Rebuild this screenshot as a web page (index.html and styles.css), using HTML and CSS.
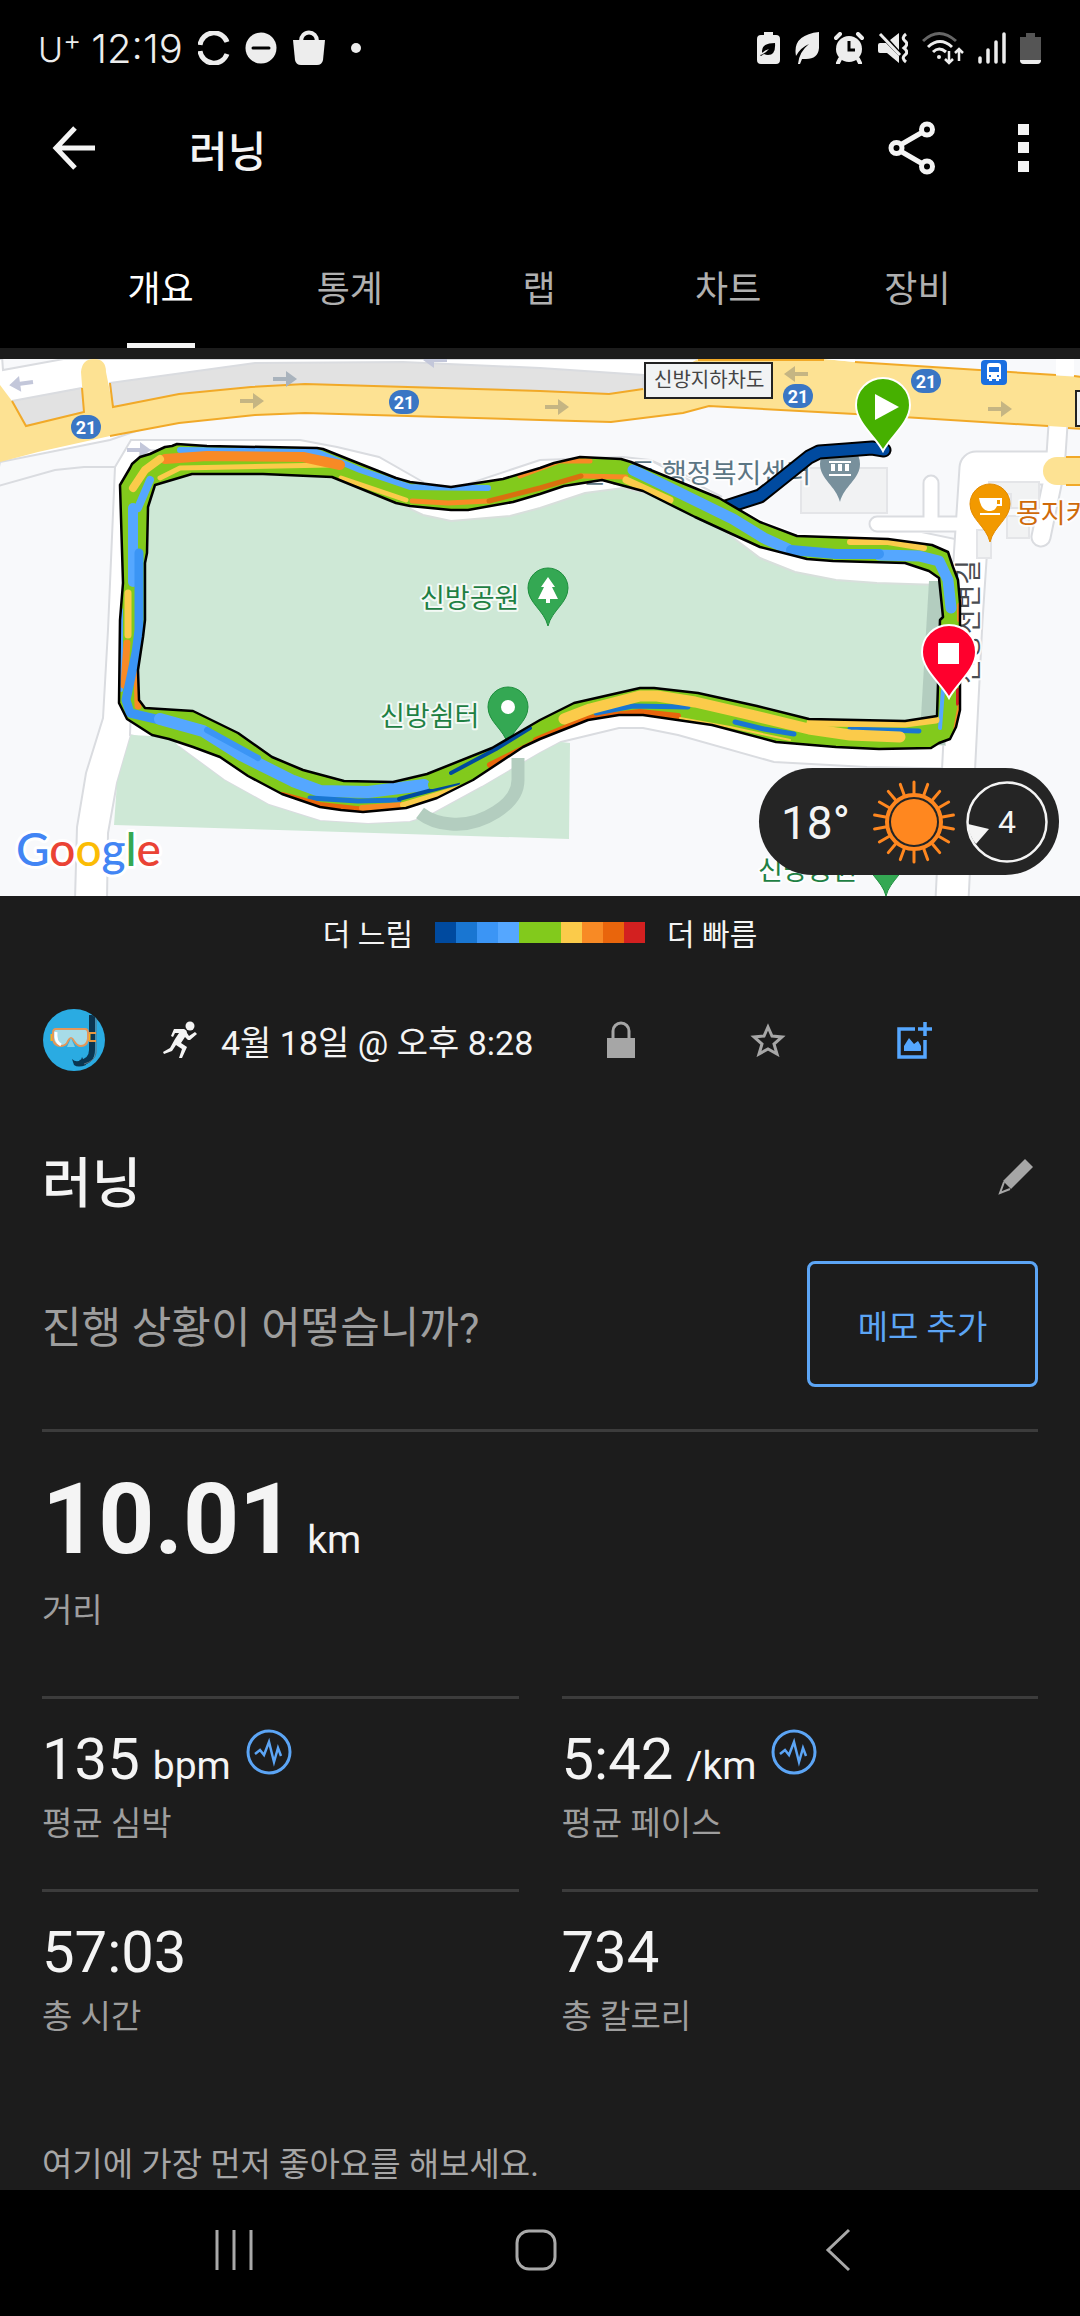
FILE: index.html
```html
<!DOCTYPE html>
<html lang="ko">
<head>
  <meta charset="UTF-8" />
  <meta name="viewport" content="width=device-width, initial-scale=1.0" />
  <title>러닝</title>
  <link rel="stylesheet" href="styles.css">
</head>
<body>
  <header class="header">
    <div class="status-bar">
      <div class="status-left">
        <span class="carrier">U<sup>+</sup></span>
        <span class="clock">12:19</span>
        <svg class="status-icon" width="32" height="34" viewBox="0 0 32 34"><path d="M2 14a14 14 0 0 1 27-3M2 20a14 14 0 0 0 27 3" fill="none" stroke="#ededed" stroke-width="5"/></svg>
        <svg class="status-icon" width="32" height="34" viewBox="0 0 32 34"><circle cx="16" cy="17" r="15.500" fill="#ededed"/><path d="M8 17h16" stroke="#000" stroke-width="3" stroke-linecap="round"/></svg>
        <svg class="status-icon" width="34" height="38" viewBox="0 0 34 38"><path d="M1 11h32l-2 20q-1 5-6 5H9q-5 0-6-5Z" fill="#ededed"/><path d="M9 12a8 8.500 0 0 1 16 0" fill="none" stroke="#ededed" stroke-width="4"/></svg>
        <span class="dot"></span>
      </div>
      <div class="status-right">
        <svg width="23" height="34" viewBox="0 0 23 34"><path d="M7 1h9v3h3q4 0 4 4v21q0 4-4 4H4q-4 0-4-4V8q0-4 4-4h3Z" fill="#ededed"/><path d="M5 20q0-8 13-8 1 12-7 12-2 0-4-1l-3 2-1-1q5-1 9-6-4 1-7 4Z" fill="#000"/></svg>
        <svg width="26" height="34" viewBox="0 0 26 34"><path d="M2 25Q-2 4 25 1v16q-1 11-13 11-3 0-4 0l-2 5H4q1-12 11-20-9 4-13 12Z" fill="#ededed"/></svg>
        <svg width="30" height="32" viewBox="0 0 30 32"><circle cx="15" cy="17" r="13" fill="#ededed"/><path d="M2 6l4-4M28 6l-4-4M6 27l-2 4M24 27l2 4" stroke="#ededed" stroke-width="4" stroke-linecap="round"/><path d="M15 9v9h6" fill="none" stroke="#000" stroke-width="3"/></svg>
        <svg width="30" height="32" viewBox="0 0 30 32"><path d="M0 13q0-2 2-2h6l13 13v7L9 21H2q-2 0-2-2ZM12 8l9-7v17Z" fill="#ededed"/><path d="M2 2l20 21" stroke="#ededed" stroke-width="3"/><path d="M28 2q-5 4-1 7t-1 7q5 4 1 7t1 7" fill="none" stroke="#ededed" stroke-width="3"/></svg>
        <svg width="42" height="34" viewBox="0 0 42 34"><g fill="none" stroke="#ededed" stroke-width="3"><path d="M1 10Q17-5 34 10" stroke="#666"/><path d="M6 16q12-11 24 0M11 21q6-6 13 0"/><path d="M27 20v12M23 28l4 4 4-4M37 30V19M33 22l4-4 4 4" stroke-width="2.500"/></g><circle cx="17" cy="26" r="2" fill="#ededed"/></svg>
        <svg width="28" height="32" viewBox="0 0 28 32"><path d="M2 26v4M10 18v12M18 10v20M26 2v28" stroke="#ededed" stroke-width="3.500" stroke-linecap="round"/></svg>
        <svg width="22" height="34" viewBox="0 0 22 34"><path d="M6 2h9v4h6v23q0 4-4 4H4q-4 0-4-4V6h6Z" fill="#555"/><path d="M0 29h21q0 4-4 4H4q-4 0-4-4Z" fill="#ededed"/></svg>
      </div>
    </div>

    <div class="app-bar">
      <button class="icon-btn back-btn" aria-label="뒤로">
        <svg width="44" height="44" viewBox="0 0 44 44"><path d="M43 22H4M23 2L4 22l19 20" fill="none" stroke="#f4f4f4" stroke-width="5"/></svg>
      </button>
      <h1 class="app-title">러닝</h1>
      <button class="icon-btn" aria-label="공유">
        <svg width="48" height="54" viewBox="0 0 48 54" fill="none" stroke="#f4f4f4" stroke-width="5"><path d="M14 23l19-11M14 31l19 11"/><circle cx="8.500" cy="27" r="5.500"/><circle cx="39" cy="8.500" r="5.500"/><circle cx="39" cy="45.500" r="5.500"/></svg>
      </button>
      <button class="icon-btn" aria-label="더보기">
        <svg width="12" height="48" viewBox="0 0 12 48" fill="#f4f4f4"><path d="M0 0h11v11H0zM0 18h11v11H0zM0 37h11v11H0z"/></svg>
      </button>
    </div>

    <nav class="tabs">
      <button class="tab active">개요</button>
      <button class="tab">통계</button>
      <button class="tab">랩</button>
      <button class="tab">차트</button>
      <button class="tab">장비</button>
    </nav>
  </header>

  <main>
    <section class="map">
      <svg class="map-svg" viewBox="0 359 1080 537">
        <defs>
          <path id="ring" fill-rule="evenodd" clip-rule="evenodd" d="M120 485L130 468 132 464 140 457 150 454 165 447 172 446 177 444 207 446 317 448 323 449 358 463 396 478 410 482 451 487 503 479 540 468 554 463 580 457 621 459 631 462 719 498 760 522 797 536 888 539 932 545 948 552 953 567 958 580 960 603 960 710 956 727 950 739 939 743 931 748 879 749 836 747 776 742 712 725 643 715 619 715 588 720 540 739 523 747 473 780 437 798 406 808 363 812 341 810 320 807 282 794 248 776 220 757 193 747 169 739 152 735 127 719 119 703 120 620 123 583ZM155 485L192 474 263 474 332 477 396 503 410 506 451 510 468 510 513 502 540 494 564 486 602 480 643 491 695 517 760 547 807 559 833 561 905 563 929 571 939 578 943 617 940 620 937 716 905 721 809 719 757 706 698 693 654 688 640 688 574 703 540 720 492 748 427 774 393 782 344 781 303 770 272 757 238 733 193 711 145 708 139 700 138 670 143 637 145 620 145 563 147 553 148 507Z"/>
          <clipPath id="ringClip"><use href="#ring"/></clipPath>
          <path id="poi" d="M0 38C-4 22-20 15-20 0a20 20 0 0 1 40 0C20 15 4 22 0 38Z"/>
          <path id="pin" d="M0 46C-7 32-27 18-27 0a27 27 0 0 1 54 0C27 18 7 32 0 46Z"/>
          <path id="arrow" d="M0-2h13v-6l11 8-11 8V2H0Z"/>
          <g id="route21"><rect x="-15" y="-12" width="30" height="24" rx="12" fill="#3a76c4"/><text class="badge-text" y="7">21</text></g>
        </defs>

        <rect x="0" y="359" width="1080" height="537" fill="#f8f9fb"/>

        <!-- streets -->
        <path d="M-5 487L55 470 84 467 115 467 131 440 300 440 337 447 379 457 423 482 406 510 160 500 131 735 117 783 108 833 107 900H75L77 827 86 773 103 718 108 630 115 467 84 467 55 470-5 487V359H720L640 385 300 375 110 440 0 462Z" fill="#fff" stroke="#dadce0" stroke-width="2"/>
        <path d="M2 356l1 14 77-14" fill="#f8f9fb" stroke="#dadce0" stroke-width="2"/>
        <path d="M130 735L179 747 224 780 269 805 320 821 368 824 410 822 427 817 482 787 540 753 561 742 619 728 643 728 678 735 774 762 867 767 975 769V590L960 540 720 490 650 460 623 457 540 460 450 490H410L330 455 140 450Z" fill="#fff" stroke="#dadce0" stroke-width="2"/>
        <path d="M722 497L760 519 797 533H960L957 440H640Z" fill="#f8f9fb"/>
        <path d="M650 460l72 37" fill="none" stroke="#dadce0" stroke-width="2"/>
        <rect x="801" y="468" width="86" height="45" fill="#f1f2f3" stroke="#e4e5e8" stroke-width="2"/>
        <g fill="none" stroke-linecap="round" stroke-linejoin="round">
          <g stroke="#dadce0"><path d="M877 524h85M931 483v40" stroke-width="17"/><path d="M1058 425L1055 470 1041 537" stroke-width="21"/><path d="M1050 468H976L970 560 966 620 952 900" stroke-width="35"/></g>
          <g stroke="#fff"><path d="M877 524h85M931 483v40" stroke-width="13"/><path d="M1058 425L1055 470 1041 537" stroke-width="17"/><path d="M1050 468H976L970 560 966 620 952 900" stroke-width="31"/></g>
        </g>
        <path d="M989 482h50v26h-28v-14h-22ZM1007 516h22v22h-22ZM977 530h14v28h-14Z" fill="#f1f2f3" stroke="#e4e5e8" stroke-width="2"/>

        <!-- park -->
        <path d="M137 480L330 465 406 507 423 515 451 521 510 516 540 508 585 493 623 488 667 498 719 527 760 558 795 572 836 580 877 583 939 585 945 745 835 735 760 720 640 700 540 730 420 785 350 795 270 765 190 725 130 710Z" fill="#cee8d6" stroke="#d8dfdc" stroke-width="2"/>
        <path d="M131 735L172 737 179 747 224 780 269 805 320 821 368 824 410 822 427 817 482 787 540 753 561 742 570 743 569 839 114 825 117 783Z" fill="#cee8d6"/>
        <path d="M929 581h16v164h-10l-14-28Z" fill="#b3cdbf"/>
        <path d="M518 758v22q0 18-22 32t-45 12q-18-1-31-11" fill="none" stroke="#b3cdbf" stroke-width="13"/>

        <!-- main road -->
        <path d="M110 383L255 363 403 362 540 368 643 375V392L609 394 540 391 305 384 113 407ZM12 401l70-13 2 24-58 14Z" fill="#e2e2e2" stroke="#dadce0" stroke-width="2"/>
        <path d="M0 385L12 401 26 426 84 412 81 372Q82 359 94 359T106 372L113 407 179 394 251 387 305 384 540 391 609 394 643 389 698 359H824L855 362 1080 377V428L855 414 709 406 683 413 611 422 540 420 305 413 255 415 179 423 110 436 38 452 0 462Z" fill="#fde293"/>
        <path d="M12 401L26 426 84 412 82 388M110 383L113 407 179 394 251 387 305 384 540 391 609 394 643 389M698 360H824M855 362L1056 375M1074 376l8 1M110 436L179 423 255 415 305 413 540 420 611 422 683 413 709 406 855 414 1048 426M1068 428l14 1" fill="none" stroke="#f1a928" stroke-width="2"/>
        <path d="M1056 359h18v17l-18-1ZM824 359h31v3Z" fill="#fff"/>
        <path d="M1080 457h-23a14 14 0 0 0 0 28h23Z" fill="#fde293"/><path d="M1066 457h16M1066 485h16" stroke="#f1a928" stroke-width="2"/>
        <g fill="#c5b583"><use href="#arrow" x="240" y="401"/><use href="#arrow" x="545" y="407"/><use href="#arrow" x="988" y="409"/><use href="#arrow" transform="translate(808 374) rotate(180)"/></g>
        <g fill="#c3c7da"><use href="#arrow" x="127" y="450"/><use href="#arrow" transform="translate(33 382) rotate(172)"/><use href="#arrow" transform="translate(447 360) rotate(180)"/><use href="#arrow" x="273" y="379" fill="#a9b3bd"/></g>

        <use href="#route21" x="404" y="402"/>
        <use href="#route21" x="86" y="427"/>
        <use href="#route21" x="798" y="396"/>
        <use href="#route21" x="926" y="381"/>
        <rect x="645" y="363" width="127" height="35" fill="#f1f3f4" stroke="#222" stroke-width="2"/>
        <text class="road-sign" x="654" y="387">신방지하차도</text>
        <rect x="1076" y="391" width="20" height="35" fill="#f1f3f4" stroke="#222" stroke-width="2"/>
        <rect x="981" y="360" width="26" height="25" rx="4" fill="#1a6fe0"/>
        <path d="M987 366q0-3 3-3h8q3 0 3 3v13h-2v2h-3v-2h-4v2h-3v-2h-2ZM989 367v5h10v-5ZM989 375v2h2v-2ZM997 375v2h2v-2Z" fill="#fff" fill-rule="evenodd"/>

        <!-- places -->
        <g class="map-label">
          <text x="811" y="483" fill="#5c7684" text-anchor="end">신방동 행정복지센터</text>
          <text x="420" y="608" fill="#1e8043">신방공원</text>
          <text x="380" y="726" fill="#1e8043">신방쉼터</text>
          <text x="758" y="880" fill="#1e8043">신방공원</text>
          <text x="1016" y="523" fill="#cf6a0a">몽지카</text>
          <text transform="translate(978 684) rotate(-90)" fill="#4a4d51">신방천변길</text>
        </g>
        <use href="#poi" x="840" y="464" fill="#78909c"/>
        <path d="M829 461h22v2h-22ZM831 464h4v7h-4ZM838 464h4v7h-4ZM845 464h4v7h-4ZM829 474h22v2h-22Z" fill="#fff"/>
        <use href="#poi" x="548" y="588" fill="#34a853" stroke="#1e8e3e"/>
        <path d="M548 577l7 10h-3l6 12h-8v4h-4v-4h-8l6-12h-3Z" fill="#fff"/>
        <use href="#poi" x="508" y="707" fill="#34a853" stroke="#1e8e3e"/>
        <circle cx="508" cy="707" r="7" fill="#fff"/>
        <use href="#poi" x="886" y="858" fill="#34a853" stroke="#1e8e3e"/>
        <use href="#poi" x="990" y="504" fill="#f29900" stroke="#e38b00"/>
        <path d="M979 498h23v8h-5q-2 5-6 5h-3q-7-1-9-13ZM997 500v4h3v-4ZM980 513h20v2h-20Z" fill="#fff" fill-rule="evenodd"/>

        <!-- run track, coloured by pace -->
        <g fill="none" stroke-linecap="round" stroke-linejoin="round">
          <path d="M884 450L872 448 846 450 819 452 809 457 774 485 760 496 726 507" stroke="#000" stroke-width="15"/>
          <path d="M884 450L872 448 846 450 819 452 809 457 774 485 760 496 726 507" stroke="#004a9f" stroke-width="11"/>
          <use href="#ring" fill="#82ca1c"/>
          <g clip-path="url(#ringClip)">
            <path d="M180 450L317 452 360 470 410 487 488 488" stroke="#55a7ff" stroke-width="6"/>
            <path d="M160 478L180 468 330 465" stroke="#fbcb4a" stroke-width="5"/>
            <path d="M165 459L207 456 303 457 340 465" stroke="#f88a25" stroke-width="10"/>
            <path d="M133 488L145 470 160 459" stroke="#fbcb4a" stroke-width="8"/>
            <path d="M341 478L406 500" stroke="#fbcb4a" stroke-width="5"/>
            <path d="M412 501L448 503 489 501M520 476L560 461 590 461M581 476L626 477" stroke="#f88a25" stroke-width="5"/>
            <path d="M489 501L540 488 581 476" stroke="#d9700f" stroke-width="5"/>
            <path d="M626 480L670 500" stroke="#fbcb4a" stroke-width="7"/>
            <path d="M850 542L888 542 924 548" stroke="#fbcb4a" stroke-width="6"/>
            <path d="M633 470L733 519 764 538 788 549M879 555L919 556 939 561 948 580 951 608" stroke="#55a7ff" stroke-width="11"/>
            <path d="M791 550L836 554 879 554" stroke="#3b95f5" stroke-width="10"/>
            <path d="M959 605V620" stroke="#f88a25" stroke-width="4"/>
            <path d="M958 690V704" stroke="#d32020" stroke-width="4"/><path d="M959 706L955 728" stroke="#f88a25" stroke-width="3"/>
            <path d="M943 690L940 728" stroke="#55a7ff" stroke-width="4"/>
            <path d="M536 740L588 718 640 712 678 716" stroke="#e9650c" stroke-width="6"/>
            <path d="M596 713L633 706 688 707M735 722L764 729 794 734M850 729L919 731" stroke="#1976d2" stroke-width="5"/>
            <path d="M810 723L905 724 936 720" stroke="#fbcb4a" stroke-width="7"/>
            <path d="M680 718L730 727 790 740" stroke="#fbcb4a" stroke-width="2"/>
            <path d="M564 719L590 709 640 696 657 696 695 702 747 714 809 729 850 735 900 737" stroke="#fbcb4a" stroke-width="11"/>
            <path d="M133 508V582" stroke="#55a7ff" stroke-width="10"/><path d="M150 480L138 508" stroke="#55a7ff" stroke-width="8"/>
            <path d="M121 610V690" stroke="#55a7ff" stroke-width="4"/>
            <path d="M128 593V635" stroke="#fbcb4a" stroke-width="7"/>
            <path d="M127 643L124 685M137 670L138 706" stroke="#f88a25" stroke-width="7"/>
            <path d="M139 553L139 630 136 653 126 700 130 713 160 720" stroke="#3b95f5" stroke-width="9"/>
            <path d="M160 719L203 731 241 755 293 781 320 791 368 792 424 785" stroke="#55a7ff" stroke-width="12"/>
            <path d="M207 730L258 758" stroke="#3b95f5" stroke-width="6"/>
            <path d="M310 798L358 801 399 800" stroke="#1976d2" stroke-width="5"/>
            <path d="M399 799L458 783M451 773L496 749 530 728" stroke="#004a9f" stroke-width="4"/>
            <path d="M432 785L475 775" stroke="#82ca1c" stroke-width="8"/>
            <path d="M282 795L320 805 365 810M490 765L540 740" stroke="#e9650c" stroke-width="6"/>
            <path d="M362 808L403 805" stroke="#f88a25" stroke-width="6"/>
            <path d="M403 805L460 788" stroke="#fbcb4a" stroke-width="6"/>
          </g>
          <use href="#ring" stroke="#000" stroke-width="2.500"/>
        </g>

        <use href="#pin" x="883" y="405" fill="#46b000" stroke="#fff" stroke-width="2"/>
        <path d="M875 394v26l24-13Z" fill="#fff"/>
        <use href="#pin" x="949" y="652" fill="#ff002d" stroke="#fff" stroke-width="2"/>
        <path d="M938 643h21v21h-21Z" fill="#fff"/>

        <text class="google" x="16" y="866"><tspan fill="#4285f4">G</tspan><tspan fill="#ea4335">o</tspan><tspan fill="#fbbc05">o</tspan><tspan fill="#4285f4">g</tspan><tspan fill="#34a853">l</tspan><tspan fill="#ea4335">e</tspan></text>
      </svg>

      <div class="weather">
        <span class="temperature">18°</span>
        <svg class="sun" width="82" height="84" viewBox="-41 -42 82 84">
          <g stroke="#ff871f" stroke-width="3" stroke-linecap="round">
            <g id="rays"><path d="M0-29V-40"/><path d="M0-29V-40" transform="rotate(20)"/><path d="M0-29V-40" transform="rotate(40)"/><path d="M0-29V-40" transform="rotate(60)"/><path d="M0-29V-40" transform="rotate(80)"/><path d="M0-29V-40" transform="rotate(100)"/></g>
            <use href="#rays" transform="rotate(120)"/><use href="#rays" transform="rotate(240)"/>
          </g>
          <circle r="27" fill="none" stroke="#ff871f" stroke-width="4"/>
          <circle r="23" fill="#ff871f"/>
        </svg>
        <div class="wind">
          <svg class="wind-ring" viewBox="0 0 82 82"><circle cx="41" cy="41" r="39.500" fill="none" stroke="#f4f4f4" stroke-width="2.500"/><path d="M2 43L23 48 10 63Q3 55 2 43Z" fill="#f4f4f4"/></svg>
          <span>4</span>
        </div>
      </div>
    </section>

    <div class="legend">
      <span>더 느림</span>
      <div class="legend-bar"><i class="pace-1"></i><i class="pace-2"></i><i class="pace-3"></i><i class="pace-4"></i><i class="pace-5"></i><i class="pace-5"></i><i class="pace-6"></i><i class="pace-7"></i><i class="pace-8"></i><i class="pace-9"></i></div>
      <span>더 빠름</span>
    </div>

    <section class="activity">
      <svg class="avatar" width="64" height="64" viewBox="0 0 64 64">
        <clipPath id="face"><circle cx="32" cy="32" r="31"/></clipPath>
        <circle cx="32" cy="32" r="31" fill="#2aabe2"/>
        <g clip-path="url(#face)">
          <path d="M50 7V42Q50 53 38 55" fill="none" stroke="#0b3550" stroke-width="6"/>
          <path d="M30 51q4 4 9 1l1-3 4 8q-8 3-12 0Z" fill="#0b3550"/>
          <path d="M54 9v36q-1 8-12 11" fill="none" stroke="#5c7180" stroke-width="1"/>
          <path d="M10 26v7M47 26v7" stroke="#f6b21c" stroke-width="3"/>
          <path d="M47 25h7M47 33h7" stroke="#e8963e" stroke-width="2"/>
          <path d="M14 21H43q3 0 3 4v6q-1 7-7 7-4 0-7-5-3-6-6 0-2 5-7 5-7 0-8-7v-6q0-4 3-4Z" fill="#a7dce8" stroke="#e3975a" stroke-width="2"/>
          <path d="M14 24q-1 10 5 13" fill="none" stroke="#fff" stroke-width="3"/>
          <path d="M25 39l4-9 4 9" fill="#7ed0ea"/>
        </g>
      </svg>
      <svg class="runner" width="34" height="38" viewBox="0 0 34 38" fill="#f4f4f4"><circle cx="27" cy="5" r="4.500"/><path d="M11 8L21 8Q24 9 24 12L26 15 32 11 34 13 27 19 25 19 22 16 18 22 24 26 19 37 16 37 19 28 13 24 9 30 1 33 0 31 7 27 12 18 16 12 12 12 10 16 8 15Z"/></svg>
      <time class="date">4월 18일 @ 오후 8:28</time>
      <div class="activity-actions">
        <button class="icon-btn" aria-label="비공개">
          <svg width="28" height="38" viewBox="0 0 28 38"><path d="M0 17h28v20H0z" fill="#a6a6a6"/><path d="M6 18V10a8 8 0 0 1 16 0v8" fill="none" stroke="#a6a6a6" stroke-width="3"/></svg>
        </button>
        <button class="icon-btn" aria-label="즐겨찾기">
          <svg width="36" height="34" viewBox="0 0 36 34"><path d="M18 4l4 9 10 1-8 7 3 10-9-5-9 5 3-10-8-7 10-1Z" fill="none" stroke="#a6a6a6" stroke-width="3"/></svg>
        </button>
        <button class="icon-btn" aria-label="사진 추가">
          <svg width="36" height="38" viewBox="0 0 36 38"><path d="M18 8H2v28h26V19M28 1v14M21 8h14" fill="none" stroke="#55a7ff" stroke-width="3.500"/><path d="M7 30v-5l5-8 5 6 4-3 3 5v5Z" fill="#55a7ff"/></svg>
        </button>
      </div>
    </section>

    <section class="name-row">
      <h2>러닝</h2>
      <button class="icon-btn" aria-label="이름 편집">
        <svg width="40" height="38" viewBox="0 0 40 38"><path d="M27 1l8 8-22 22-8-8Z" fill="#a6a6a6"/><path d="M6 24L2 35 12 31" fill="none" stroke="#a6a6a6" stroke-width="2"/></svg>
      </button>
    </section>

    <section class="note-row">
      <p>진행 상황이 어떻습니까?</p>
      <button class="note-btn">메모 추가</button>
    </section>

    <section class="stats">
      <div class="stat stat-main">
        <div class="stat-value">10.01 <small>km</small></div>
        <div class="stat-label">거리</div>
      </div>
      <div class="stat">
        <div class="stat-value">135 <small>bpm</small>
          <svg class="chart-icon" width="46" height="46" viewBox="0 0 46 46" fill="none" stroke="#5ca5f5"><circle cx="23" cy="23" r="21" stroke-width="3"/><path d="M9 25l5-4 4 5 5-13 5 20 4-14 3 8" stroke-width="2.500"/></svg>
        </div>
        <div class="stat-label">평균 심박</div>
      </div>
      <div class="stat">
        <div class="stat-value">5:42 <small>/km</small>
          <svg class="chart-icon" width="46" height="46" viewBox="0 0 46 46" fill="none" stroke="#5ca5f5"><circle cx="23" cy="23" r="21" stroke-width="3"/><path d="M9 25l5-4 4 5 5-13 5 20 4-14 3 8" stroke-width="2.500"/></svg>
        </div>
        <div class="stat-label">평균 페이스</div>
      </div>
      <div class="stat">
        <div class="stat-value">57:03</div>
        <div class="stat-label">총 시간</div>
      </div>
      <div class="stat">
        <div class="stat-value">734</div>
        <div class="stat-label">총 칼로리</div>
      </div>
    </section>

    <p class="likes">여기에 가장 먼저 좋아요를 해보세요.</p>
  </main>

  <nav class="system-nav">
    <button class="icon-btn" aria-label="최근 앱"><svg width="42" height="44" viewBox="0 0 42 44"><path d="M4 2v40M21 2v40M38 2v40" stroke="#a9a9a9" stroke-width="3"/></svg></button>
    <button class="icon-btn" aria-label="홈"><svg width="42" height="44" viewBox="0 0 42 44"><rect x="2" y="3" width="38" height="38" rx="12" fill="none" stroke="#a9a9a9" stroke-width="3"/></svg></button>
    <button class="icon-btn" aria-label="이전"><svg width="42" height="44" viewBox="0 0 42 44"><path d="M32 2L11 22l21 20" fill="none" stroke="#a9a9a9" stroke-width="3"/></svg></button>
  </nav>
</body>
</html>
```

FILE: styles.css
```css
* {
  box-sizing: border-box;
  margin: 0;
  padding: 0;
}
body {
  display: flex;
  flex-direction: column;
  min-height: 100vh;
  background: #1c1c1c;
  color: #f4f4f4;
  font-family: Roboto, 'Noto Sans CJK KR', sans-serif;
}
button {
  background: none;
  border: none;
  color: inherit;
  font-family: inherit;
  cursor: pointer;
}
svg {
  display: block;
  flex-shrink: 0;
}
main {
  flex: 1;
}
.icon-btn {
  display: flex;
  align-items: center;
  justify-content: center;
}

/* header */
.header {
  background: #000;
}
.status-bar {
  display: flex;
  align-items: center;
  justify-content: space-between;
  height: 96px;
  padding: 0 38px;
  color: #ededed;
  font-family: Inter, sans-serif;
  font-size: 40px;
  font-weight: 300;
}
.status-left,
.status-right {
  display: flex;
  align-items: center;
}
.status-left {
  gap: 15px;
}
.status-right {
  gap: 14px;
}
.carrier {
  margin-right: -5px;
  font-size: 34px;
}
.carrier sup {
  font-size: 28px;
  line-height: 1;
}
.dot {
  width: 10px;
  height: 10px;
  margin-left: 10px;
  border-radius: 50%;
  background: #ededed;
}
.app-bar {
  display: flex;
  align-items: center;
  gap: 82px;
  height: 104px;
  padding: 0 50px 0 52px;
}
.app-title {
  flex: 1;
  margin-left: 11px;
  font-size: 42px;
  font-weight: 500;
}
.tabs {
  display: flex;
  padding: 0 68px 0 66px;
}
.tab {
  position: relative;
  flex: 1;
  height: 148px;
  padding-top: 24px;
  color: #b0b0b0;
  font-size: 36px;
}
.tab.active {
  color: #fff;
}
.tab.active::after {
  content: '';
  position: absolute;
  bottom: 0;
  left: 50%;
  width: 68px;
  height: 5px;
  margin-left: -34px;
  background: #f4f4f4;
}

/* map */
.map {
  position: relative;
  margin-top: 11px;
}
.map-svg {
  width: 100%;
}
.map-label text {
  font-size: 27px;
  stroke: #fff;
  stroke-width: 4px;
  stroke-linejoin: round;
  stroke-opacity: 0.8;
  paint-order: stroke;
}
.road-sign {
  font-size: 20px;
  fill: #444;
}
.badge-text {
  font-size: 18px;
  font-weight: 700;
  fill: #fff;
  text-anchor: middle;
}
.google {
  font-family: Lato, sans-serif;
  font-size: 46px;
  font-weight: 500;
  stroke: #fff;
  stroke-width: 6px;
  stroke-linejoin: round;
  paint-order: stroke;
}
.weather {
  position: absolute;
  right: 21px;
  bottom: 21px;
  display: flex;
  align-items: center;
  width: 300px;
  height: 107px;
  padding: 0 11px 0 22px;
  border-radius: 54px;
  background: #252525;
}
.temperature {
  flex: 1;
  padding-top: 3px;
  font-size: 46px;
}
.sun {
  margin-right: 11px;
}
.wind {
  position: relative;
  display: grid;
  place-items: center;
  width: 82px;
  height: 82px;
  font-size: 32px;
}
.wind-ring {
  position: absolute;
  inset: 0;
}
.legend {
  display: flex;
  align-items: center;
  justify-content: center;
  gap: 22px;
  height: 72px;
  font-size: 30px;
}
.legend-bar {
  display: flex;
}
.legend-bar i {
  width: 21px;
  height: 21px;
}
.pace-1 { background: #004a9f; }
.pace-2 { background: #1976d2; }
.pace-3 { background: #3b95f5; }
.pace-4 { background: #55a7ff; }
.pace-5 { background: #82ca1c; }
.pace-6 { background: #fbcb4a; }
.pace-7 { background: #f88a25; }
.pace-8 { background: #e9650c; }
.pace-9 { background: #d32020; }

/* activity */
.activity {
  display: flex;
  align-items: center;
  height: 146px;
  padding: 0 92px 2px 42px;
}
.runner {
  margin: 0 24px 0 57px;
}
.date {
  font-size: 34px;
}
.activity-actions {
  display: flex;
  margin-left: auto;
}
.activity-actions .icon-btn {
  width: 147px;
  height: 80px;
}
.name-row,
.note-row {
  display: flex;
  align-items: center;
  justify-content: space-between;
  padding: 0 42px;
}
.name-row {
  height: 126px;
}
.name-row h2 {
  padding-top: 4px;
  font-size: 54px;
  font-weight: 500;
}
.note-row {
  padding-top: 21px;
  padding-bottom: 42px;
}
.note-row p {
  color: #9e9e9e;
  font-size: 43px;
}
.note-btn {
  width: 231px;
  height: 126px;
  padding-top: 2px;
  border: 3px solid #5ca5f5;
  border-radius: 8px;
  color: #5ca5f5;
  font-size: 33px;
}

/* stats */
.stats {
  display: grid;
  grid-template-columns: 1fr 1fr;
  column-gap: 43px;
  padding: 0 42px;
}
.stat {
  height: 193px;
  padding-top: 22px;
  border-top: 3px solid #3c3c3c;
}
.stat-main {
  grid-column: 1 / -1;
  height: 267px;
  padding-top: 30px;
}
.stat-value {
  display: flex;
  align-items: baseline;
  gap: 13px;
  margin-bottom: 3px;
  font-size: 58px;
  line-height: 76px;
}
.stat-value small {
  font-size: 39px;
  line-height: 1;
}
.stat-main .stat-value {
  gap: 12px;
  margin-bottom: 9px;
  font-size: 98px;
  font-weight: 700;
  line-height: 116px;
}
.stat-main small {
  font-weight: 400;
}
.chart-icon {
  align-self: flex-start;
  margin-left: 2px;
  margin-top: 8px;
}
.stat-label {
  color: #9e9e9e;
  font-size: 33px;
  line-height: 48px;
}
.likes {
  padding: 59px 42px 0;
  color: #a6a6a6;
  font-size: 33px;
  line-height: 48px;
}

.system-nav {
  display: flex;
  align-items: center;
  justify-content: center;
  gap: 260px;
  height: 126px;
  padding: 0 8px 6px 0;
  background: #000;
}
```
